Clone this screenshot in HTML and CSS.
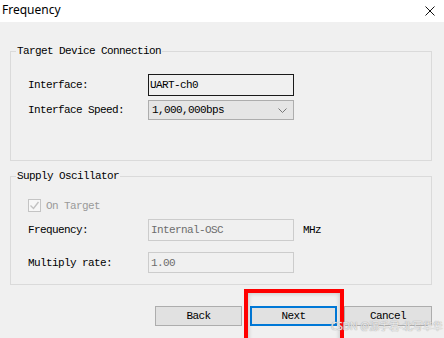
FILE: index.html
```html
<!DOCTYPE html>
<html lang="en">
<head>
  <meta charset="UTF-8">
  <title>Frequency</title>
  <link rel="stylesheet" href="styles.css">
</head>
<body>

  <div class="window">
    <div class="titlebar">
      <span class="title">Frequency</span>
      <svg class="close" width="10" height="10" viewBox="0 0 10 10">
        <path d="M0.5 0.5 L9.5 9.5 M9.5 0.5 L0.5 9.5" stroke="#111" stroke-width="1" fill="none"/>
      </svg>
    </div>

    <div class="content">
      <fieldset class="group group-conn">
        <legend>Target Device Connection</legend>
        <div class="rows">
          <div class="row row-first">
            <span class="label">Interface:</span>
            <div class="field readonly">UART-ch0</div>
          </div>
          <div class="row row-combo">
            <span class="label">Interface Speed:</span>
            <div class="field combo">
              <span>1,000,000bps</span>
              <svg width="9" height="5" viewBox="0 0 9 5">
                <path d="M0.5 0.5 L4.5 4.5 L8.5 0.5" stroke="#777" stroke-width="1" fill="none"/>
              </svg>
            </div>
          </div>
        </div>
      </fieldset>

      <fieldset class="group group-osc">
        <legend>Supply Oscillator</legend>
        <div class="rows">
          <div class="row row-check">
            <span class="checkbox">
              <svg width="11" height="11" viewBox="0 0 11 11">
                <path d="M1.5 5.5 L4.5 8.5 L9.5 2" stroke="#c2c2c2" stroke-width="1.4" fill="none"/>
              </svg>
            </span>
            <span class="check-text">On Target</span>
          </div>
          <div class="row row-freq">
            <span class="label">Frequency:</span>
            <div class="field disabled">Internal-OSC</div>
            <span class="unit">MHz</span>
          </div>
          <div class="row row-mult">
            <span class="label">Multiply rate:</span>
            <div class="field disabled">1.00</div>
          </div>
        </div>
      </fieldset>

      <div class="buttons">
        <button class="btn btn-back">Back</button>
        <button class="btn btn-next">Next</button>
        <button class="btn btn-cancel">Cancel</button>
      </div>
    </div>

    <!-- annotation over the screenshot -->
    <div class="highlight"></div>
    <div class="watermark">CSDN @源手君-北写华华</div>
  </div>

</body>
</html>
```

FILE: styles.css
```css
html, body { margin: 0; padding: 0; }
body { background: #f0f0f0; }

.window { position: relative; width: 444px; height: 338px; overflow: hidden; background: #f0f0f0;
  font-family: "Liberation Mono", "DejaVu Sans Mono", monospace; font-size: 11px; letter-spacing: -0.6px; color: #000; }

.titlebar { height: 22px; background: #fff; display: flex; align-items: center; justify-content: space-between; padding: 0 9px 0 2px; }
.title { font-family: "Noto Sans", "Liberation Sans", sans-serif; font-size: 12px; letter-spacing: 0; margin-top: -3px; }
.close { display: block; margin-top: -1px; }

.content { padding: 23px 12px 0 10px; }

.group { margin: 0; padding: 0; border: 1px solid #dadada; min-inline-size: 0; }
.group legend { padding: 0 1px; margin-left: 5px; line-height: 12px; height: 12px; }
.group-conn { padding-bottom: 40px; }
.group-osc { margin-top: 9px; padding-bottom: 11px; }

.rows { padding-left: 17px; }
.row { display: flex; align-items: center; }
.row-first { margin-top: 17px; height: 22px; }
.row-combo { margin-top: 4px; height: 20px; }
.row-check { margin-top: 17px; height: 13px; }
.row-freq { margin-top: 7px; height: 22px; }
.row-mult { margin-top: 11px; height: 21px; }

.label { width: 120px; flex: none; }

.field { box-sizing: border-box; width: 146px; height: 100%; display: flex; align-items: center; white-space: nowrap; }
.readonly { border: 1px solid #1a1a1a; background: #f0f0f0; padding-left: 1px; }
.combo { border: 1px solid #adadad; background: #e5e5e5; padding: 0 6px 0 3px; justify-content: space-between; }
.combo svg { display: block; }
.disabled { border: 1px solid #cccccc; background: #f0f0f0; color: #6d6d6d; padding-left: 2px; }
.unit { margin-left: 9px; }

.checkbox { box-sizing: border-box; width: 13px; height: 13px; border: 1px solid #c4c4c4; background: #f7f7f7;
  display: flex; align-items: center; justify-content: center; }
.checkbox svg { display: block; }
.check-text { margin-left: 5px; color: #9a9a9a; }

.buttons { margin-top: 21px; display: flex; justify-content: flex-end; gap: 7px; }
.btn { box-sizing: border-box; width: 87px; height: 20px; margin: 0; padding: 0; background: #e1e1e1; border: 1px solid #adadad;
  font: inherit; letter-spacing: -0.6px; color: #000; }
.btn-back { margin-right: 1px; }
.btn-next { border: 2px solid #0078d7; }
.btn-cancel { width: 88px; }

.highlight { position: absolute; left: 244px; top: 289px; width: 100px; height: 60px; box-sizing: border-box;
  border: 4px solid #ff0000; box-shadow: inset 0 0 5px rgba(0, 0, 0, 0.22); }

.watermark { position: absolute; left: 331px; top: 318px; font-family: "Noto Sans", "Noto Sans CJK SC", sans-serif; font-size: 10px;
  letter-spacing: 0; color: rgba(255, 255, 255, 0.75); text-shadow: 0 0 1px #a8a8a8, 0 0 1px #a8a8a8; white-space: nowrap; }
```
